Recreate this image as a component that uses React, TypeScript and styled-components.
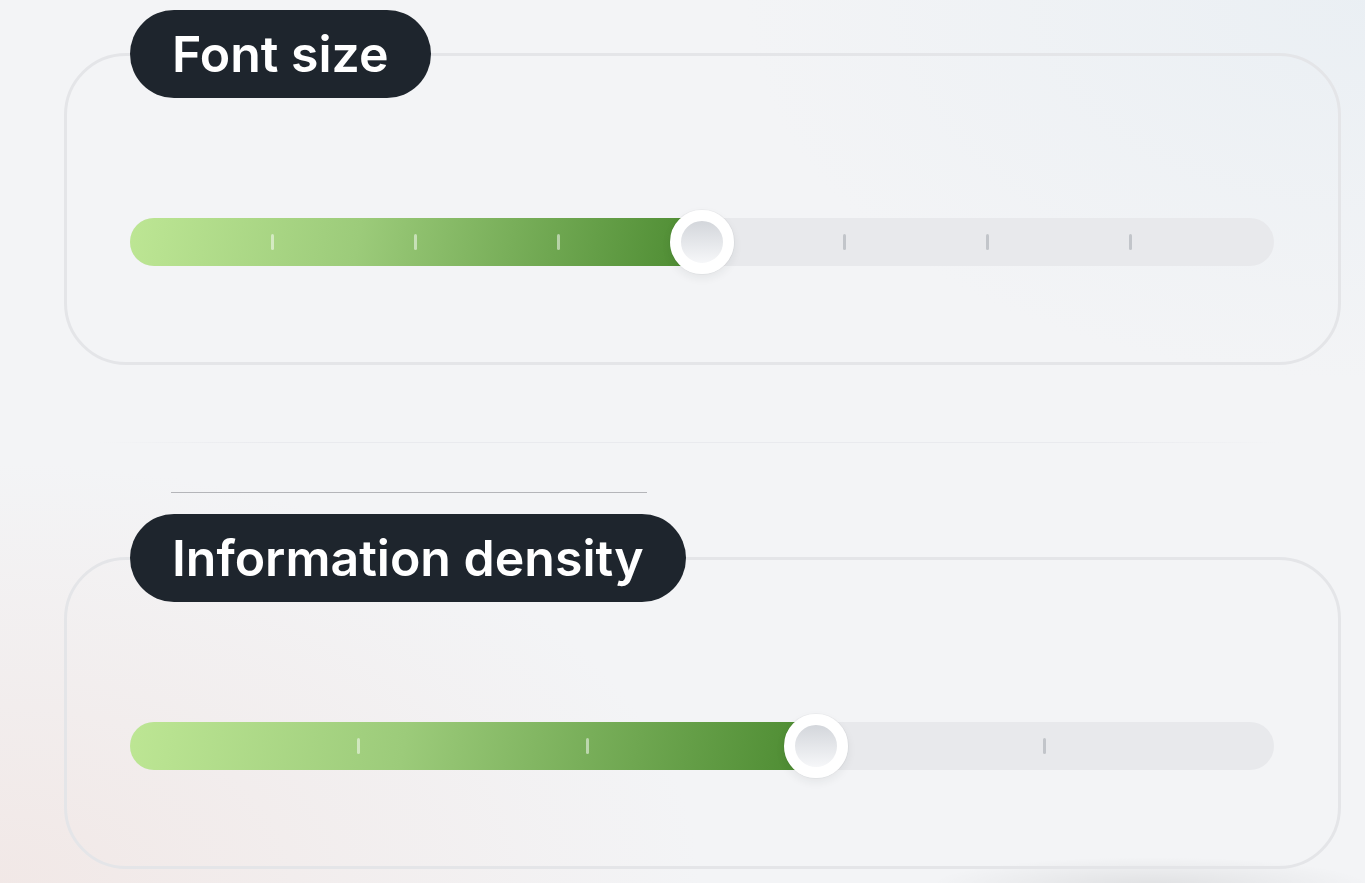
import styled, { createGlobalStyle } from "styled-components";

const GlobalStyle = createGlobalStyle`
  html, body {
    margin: 0;
    padding: 0;
  }
  body {
    min-height: 883px;
    font-family: "Inter", "Liberation Sans", sans-serif;
    background-color: #f3f4f6;
    background-image:
      radial-gradient(ellipse 220px 28px at 1150px 885px, rgba(0, 0, 0, 0.08), rgba(0, 0, 0, 0)),
      radial-gradient(ellipse 700px 420px at 0px 883px, rgba(240, 224, 220, 0.6), rgba(240, 224, 220, 0)),
      radial-gradient(ellipse 620px 380px at 1365px 0px, rgba(232, 238, 243, 0.8), rgba(232, 238, 243, 0));
    background-repeat: no-repeat;
    overflow: hidden;
  }
`;

type SettingProps = {
  label: string;
  steps: number;
  value: number;
};

function Setting({ label, steps, value }: SettingProps) {
  const cells = [];
  for (let i = 1; i <= steps; i++) {
    const show = i !== value && i !== steps;
    cells.push(
      <StTickCell key={i}>{show && <StTick $filled={i < value} />}</StTickCell>
    );
  }

  return (
    <StFieldset>
      <StLegend>{label}</StLegend>
      <StTrack>
        <StFill style={{ width: `${(value / steps) * 100}%` }}>
          <StThumb />
        </StFill>
        <StTicks $steps={steps}>{cells}</StTicks>
      </StTrack>
    </StFieldset>
  );
}

function App() {
  return (
    <>
      <GlobalStyle />
      <StPage>
        <Setting label="Font size" steps={8} value={4} />
        <StBreak>
          <StFaintLine />
          <StDivider />
        </StBreak>
        <Setting label="Information density" steps={5} value={3} />
      </StPage>
    </>
  );
}

const StPage = styled.main`
  display: flex;
  flex-direction: column;
  padding: 10px 0 0 64px;
  width: 1277px;
`;

const StFieldset = styled.fieldset`
  margin: 0;
  min-width: 0;
  padding: 0 64px 96px 63px;
  border: 3px solid #e4e5e8;
  border-radius: 62px;
`;

const StLegend = styled.legend`
  height: 88px;
  padding: 0 42px;
  border-radius: 44px;
  background: #1e252d;
  color: #ffffff;
  font-family: "Inter", "Liberation Sans", sans-serif;
  font-weight: 600;
  font-size: 50px;
  line-height: 88px;
  letter-spacing: 0;
`;

const StTrack = styled.div`
  position: relative;
  display: flex;
  margin-top: 120px;
  height: 48px;
  border-radius: 24px;
  background: #e8e9ec;
`;

const StFill = styled.div`
  display: flex;
  justify-content: flex-end;
  align-items: center;
  border-radius: 24px 0 0 24px;
  background: linear-gradient(100deg, #bde694 0%, #9ccb7a 40%, #4b8a30 100%);
`;

const StTicks = styled.div<{ $steps: number }>`
  position: absolute;
  inset: 0;
  display: grid;
  grid-template-columns: repeat(${(p) => p.$steps}, 1fr);
  pointer-events: none;
`;

const StTickCell = styled.div`
  display: flex;
  justify-content: flex-end;
  align-items: center;
`;

const StTick = styled.span<{ $filled: boolean }>`
  width: 3px;
  height: 16px;
  margin-right: -1px;
  border-radius: 2px;
  background: ${(p) => (p.$filled ? "rgba(255, 255, 255, 0.5)" : "#c2c5ca")};
`;

const StThumb = styled.span`
  position: relative;
  z-index: 1;
  flex: none;
  width: 42px;
  height: 42px;
  margin-right: -32px;
  border: 11px solid #ffffff;
  border-radius: 50%;
  background: linear-gradient(180deg, #d3d6db 0%, #f6f7f9 100%);
  box-shadow: 0 0 0 1px rgba(30, 37, 45, 0.03), 0 4px 10px rgba(30, 37, 45, 0.07);
`;

const StBreak = styled.div`
  display: flex;
  flex-direction: column;
  padding: 77px 0 21px;
  gap: 49px;
`;

const StFaintLine = styled.div`
  height: 1px;
  margin: 0 0 0 36px;
  width: 1180px;
  background: linear-gradient(90deg, rgba(230, 231, 235, 0), #e9eaee 15%, #e9eaee 85%, rgba(230, 231, 235, 0));
`;

const StDivider = styled.hr`
  margin: 0 0 0 107px;
  width: 476px;
  height: 1px;
  border: 0;
  background: #b4b5b9;
`;

export default App;
